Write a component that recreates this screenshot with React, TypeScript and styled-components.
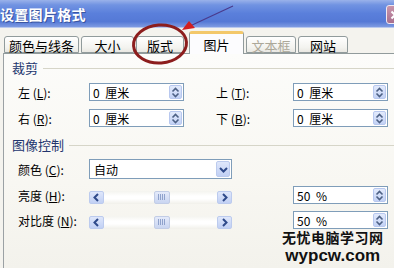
import styled, { createGlobalStyle } from 'styled-components';

const Global = createGlobalStyle`
  html, body {
    margin: 0;
    padding: 0;
    background: #f4f3ee;
  }
  body {
    font-family: "Noto Sans CJK SC", "Liberation Sans", sans-serif;
    font-size: 12px;
    color: #000;
  }
`;

const tabs = [
  { label: '颜色与线条', width: 75 },
  { label: '大小', width: 53 },
  { label: '版式', width: 48 },
  { label: '图片', width: 55, active: true },
  { label: '文本框', width: 50, disabled: true },
  { label: '网站', width: 50 },
];

const Spin = () => (
  <SpinBox>
    <svg width="9" height="11" viewBox="0 0 9 11">
      <path d="M1.5 4.5 L4.5 1.5 L7.5 4.5" fill="none" stroke="#4d6185" strokeWidth="1.6" />
      <path d="M1.5 6.5 L4.5 9.5 L7.5 6.5" fill="none" stroke="#4d6185" strokeWidth="1.6" />
    </svg>
  </SpinBox>
);

const Arrow: React.FC<{ dir: 'left' | 'right' | 'down' }> = ({ dir }) => (
  <ArrowBtn $tall={dir === 'down'}>
    <svg width="9" height="9" viewBox="0 0 9 9">
      {dir === 'left' && <path d="M6 1 L2.5 4.5 L6 8" fill="none" stroke="#2f4a8a" strokeWidth="2" />}
      {dir === 'right' && <path d="M3 1 L6.5 4.5 L3 8" fill="none" stroke="#2f4a8a" strokeWidth="2" />}
      {dir === 'down' && <path d="M1 3 L4.5 6.5 L8 3" fill="none" stroke="#2f4a8a" strokeWidth="2" />}
    </svg>
  </ArrowBtn>
);

const Slider: React.FC<{ value: number }> = ({ value }) => (
  <Track>
    <Arrow dir="left" />
    <Rail>
      <Thumb style={{ left: `${value}%` }}>
        <Grip />
      </Thumb>
    </Rail>
    <Arrow dir="right" />
  </Track>
);

const Spinner: React.FC<{ value: string }> = ({ value }) => (
  <Input>
    <Value>{value}</Value>
    <Spin />
  </Input>
);

const Label: React.FC<{ text: string; k: string; right?: boolean }> = ({ text, k, right }) => (
  <LabelText $right={right}>
    {text} (<u>{k}</u>):
  </LabelText>
);

export default function App() {
  return (
    <Page>
      <Global />
      <TitleBar>
        <Title>设置图片格式</Title>
        <Close>
          <svg width="10" height="10" viewBox="0 0 10 10">
            <path d="M1.5 1.5 L8.5 8.5 M8.5 1.5 L1.5 8.5" stroke="#fff" strokeWidth="2" />
          </svg>
        </Close>
      </TitleBar>
      <TabStrip>
        {tabs.map((t) => (
          <Tab key={t.label} $w={t.width} $active={t.active} $disabled={t.disabled}>
            {t.label}
          </Tab>
        ))}
      </TabStrip>
      <Panel>
        <Group>
          <GroupHead>裁剪</GroupHead>
        </Group>
        <CropGrid>
          <Label text="左" k="L" />
          <Spinner value="0 厘米" />
          <Label text="上" k="T" right />
          <Spinner value="0 厘米" />
          <Label text="右" k="R" />
          <Spinner value="0 厘米" />
          <Label text="下" k="B" right />
          <Spinner value="0 厘米" />
        </CropGrid>
        <Group $top={10}>
          <GroupHead>图像控制</GroupHead>
        </Group>
        <ImageGrid>
          <Label text="颜色" k="C" />
          <Select>
            <span>自动</span>
            <Arrow dir="down" />
          </Select>
          <span />
          <Label text="亮度" k="H" />
          <Slider value={44} />
          <Spinner value="50 %" />
          <Label text="对比度" k="N" />
          <Slider value={44} />
          <Spinner value="50 %" />
        </ImageGrid>
      </Panel>

      <Mark>
        <MarkCn>无忧电脑学习网</MarkCn>
        <MarkEn>wypcw.com</MarkEn>
      </Mark>

      <Callout width="394" height="268" viewBox="0 0 394 268">
        <ellipse cx="160" cy="44" rx="26.5" ry="19" fill="none" stroke="#8c1d1d" strokeWidth="3" transform="rotate(-4 160 44)" />
        <line x1="233" y1="6" x2="190" y2="26" stroke="#4a3a8c" strokeWidth="1.2" />
        <polygon points="182,30 189,21 195,28" fill="#d21f1f" />
      </Callout>
    </Page>
  );
}

const Page = styled.div`
  position: relative;
  width: 394px;
  height: 268px;
  overflow: hidden;
  background: #f4f3ee;
`;

const TitleBar = styled.div`
  height: 28px;
  box-sizing: border-box;
  display: flex;
  align-items: center;
  justify-content: space-between;
  background: linear-gradient(#9ab2ea 0%, #7193e2 18%, #5a7fdb 50%, #5579d6 80%, #7e9be2 100%);
  border-bottom: 1px solid #b9c9ee;
`;

const Title = styled.div`
  font-size: 14px;
  font-weight: bold;
  color: #fff;
  letter-spacing: 0.3px;
  text-shadow: 1px 1px 0 #3a55a0;
`;

const Close = styled.div`
  width: 20px;
  height: 19px;
  margin-right: -12px;
  margin-top: 2px;
  box-sizing: border-box;
  border: 1px solid #f0e8f0;
  border-radius: 3px;
  background: linear-gradient(#c995ab, #a8708f);
  display: flex;
  align-items: center;
  padding-left: 3px;
`;

const TabStrip = styled.div`
  height: 25px;
  display: flex;
  align-items: flex-end;
  gap: 2px;
  padding-left: 4px;
  position: relative;
  z-index: 1;
`;

const Tab = styled.div<{ $w: number; $active?: boolean; $disabled?: boolean }>`
  width: ${(p) => p.$w}px;
  height: ${(p) => (p.$active ? 23 : 17)}px;
  margin-left: ${(p) => (p.$active ? 3 : 0)}px;
  margin-bottom: ${(p) => (p.$active ? -1 : 0)}px;
  box-sizing: border-box;
  display: flex;
  align-items: center;
  justify-content: center;
  font-size: 13px;
  color: ${(p) => (p.$disabled ? '#aca899' : '#000')};
  border: 1px solid #919b9c;
  border-bottom: ${(p) => (p.$active ? 'none' : '1px solid #919b9c')};
  border-top: ${(p) => (p.$active ? '3px solid #f3c86a' : '1px solid #919b9c')};
  border-radius: 3px 3px 0 0;
  background: ${(p) => (p.$active ? '#fcfcfe' : 'linear-gradient(#ffffff, #f3f3ef 70%, #e9e8e2)')};
  padding-top: ${(p) => (p.$active ? 0 : 1)}px;
`;

const Panel = styled.div`
  margin-left: 3px;
  height: 215px;
  box-sizing: border-box;
  border-left: 1px solid #9ba1a4;
  border-top: 1px solid #919b9c;
  background: linear-gradient(#fcfcfa, #f8f7f2 60%, #f3f2ec);
  padding-top: 6px;
`;

const Group = styled.div<{ $top?: number }>`
  margin-top: ${(p) => p.$top ?? 0}px;
  padding-left: 8px;
  display: flex;
  align-items: center;
  height: 14px;

  &::after {
    content: '';
    flex: 1;
    height: 1px;
    margin-left: 5px;
    margin-top: 3px;
    background: #d6d5c8;
  }
`;

const GroupHead = styled.div`
  font-size: 13px;
  color: #22356e;
`;

const CropGrid = styled.div`
  margin: 9px 0 0 14px;
  display: grid;
  grid-template-columns: 71px 95px 109px 95px;
  grid-auto-rows: 18px;
  row-gap: 8px;
  align-items: center;
`;

const ImageGrid = styled.div`
  margin: 8px 0 0 14px;
  display: grid;
  grid-template-columns: 71px 143px 1fr;
  grid-template-rows: 20px 18px 18px;
  row-gap: 7px;
  padding-right: 6px;
  align-items: center;

  & > :nth-child(3n) {
    justify-self: end;
  }
`;

const LabelText = styled.div<{ $right?: boolean }>`
  padding-left: ${(p) => (p.$right ? 32 : 0)}px;
  font-size: 12px;
  white-space: nowrap;

  u {
    text-underline-offset: 1px;
  }
`;

const Input = styled.div`
  width: 95px;
  height: 18px;
  box-sizing: border-box;
  border: 1px solid #7f9db9;
  background: #fff;
  display: flex;
  align-items: center;
  justify-content: space-between;
  padding: 0 1px 0 3px;
  font-size: 12px;
`;

const Value = styled.span`
  white-space: pre;
  word-spacing: 3px;
`;

const SpinBox = styled.div`
  width: 13px;
  height: 14px;
  box-sizing: border-box;
  border: 1px solid #b8c8ef;
  border-radius: 2px;
  background: linear-gradient(#e2eafc, #c3d2f5);
  display: flex;
  align-items: center;
  justify-content: center;
`;

const Select = styled.div`
  width: 143px;
  height: 20px;
  box-sizing: border-box;
  border: 1px solid #7f9db9;
  background: #fff;
  display: flex;
  align-items: center;
  justify-content: space-between;
  padding: 0 1px 0 4px;
  font-size: 12px;
`;

const ArrowBtn = styled.div<{ $tall?: boolean }>`
  width: ${(p) => (p.$tall ? 14 : 15)}px;
  height: ${(p) => (p.$tall ? 16 : 13)}px;
  flex: none;
  box-sizing: border-box;
  border: 1px solid #bccbee;
  border-radius: 2px;
  background: linear-gradient(#dfe7fb, #c1d0f4);
  display: flex;
  align-items: center;
  justify-content: center;
`;

const Track = styled.div`
  width: 143px;
  height: 13px;
  margin-top: 4px;
  display: flex;
  background: linear-gradient(#f4f4ef, #ffffff 40%, #ffffff 60%, #f1f0ea);
`;

const Rail = styled.div`
  flex: 1;
  position: relative;
`;

const Thumb = styled.div`
  position: absolute;
  top: 0;
  width: 16px;
  height: 13px;
  box-sizing: border-box;
  border: 1px solid #c2cde6;
  border-radius: 2px;
  background: linear-gradient(#e4eafa, #c9d5f1);
  display: flex;
  align-items: center;
  justify-content: center;
`;

const Grip = styled.div`
  width: 8px;
  height: 6px;
  background: repeating-linear-gradient(90deg, #8fa2cc 0 1px, transparent 1px 2px);
`;

const Mark = styled.div`
  position: absolute;
  left: 282px;
  top: 229px;
  display: flex;
  flex-direction: column;
  align-items: center;
  gap: 3px;
`;

const MarkCn = styled.div`
  font-family: "Noto Sans CJK SC", sans-serif;
  font-size: 14px;
  line-height: 16px;
  font-weight: bold;
  letter-spacing: 0.5px;
  color: #111;
`;

const MarkEn = styled.div`
  font-family: "Liberation Sans", Arial, sans-serif;
  font-size: 17px;
  line-height: 16px;
  font-weight: bold;
  color: #111;
`;

const Callout = styled.svg`
  position: absolute;
  left: 0;
  top: 0;
  pointer-events: none;
  z-index: 2;
`;
